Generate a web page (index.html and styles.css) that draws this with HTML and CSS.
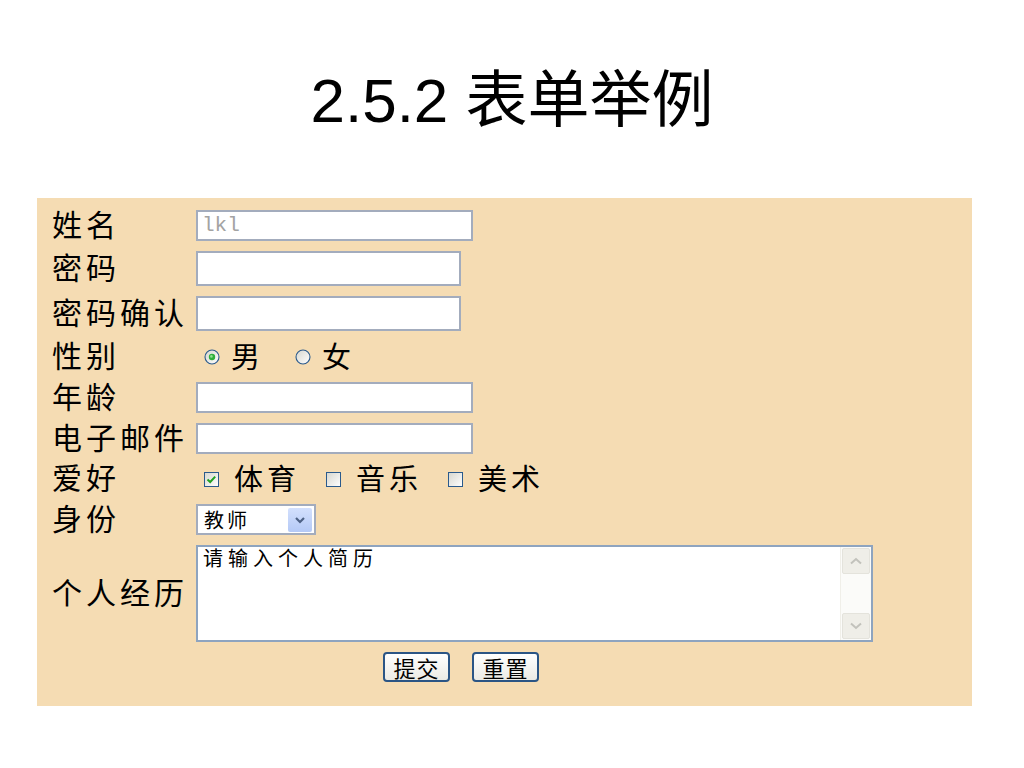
FILE: index.html
```html
<!DOCTYPE html>
<html lang="zh-CN">
<head>
    <meta charset="UTF-8">
    <meta name="viewport" content="width=device-width, initial-scale=1.0">
    <title>2.5.2 表单举例</title>
    <link rel="stylesheet" href="styles.css">
</head>
<body>
    <h1 class="title">2.5.2 表单举例</h1>

    <form class="panel">
        <div class="row">
            <label class="field-label" for="name">姓名</label>
            <input class="text wide" id="name" type="text" value="lkl">
        </div>
        <div class="row">
            <label class="field-label" for="pwd">密码</label>
            <input class="text narrow" id="pwd" type="password">
        </div>
        <div class="row">
            <label class="field-label" for="pwd2">密码确认</label>
            <input class="text narrow" id="pwd2" type="password">
        </div>
        <div class="row">
            <span class="field-label">性别</span>
            <div class="choices">
                <label class="choice radio-choice">
                    <svg width="16" height="16" viewBox="0 0 16 16">
                        <defs>
                            <linearGradient id="rg" x1="0" y1="0" x2="1" y2="1">
                                <stop offset="0" stop-color="#d6d6ce"/>
                                <stop offset="1" stop-color="#ffffff"/>
                            </linearGradient>
                        </defs>
                        <circle cx="8" cy="8" r="7" fill="url(#rg)" stroke="#2a5a8c" stroke-width="1.1"/>
                        <circle cx="8" cy="8" r="3.2" fill="#2fae3b"/>
                        <circle cx="7.4" cy="7.4" r="1.3" fill="#8fe08f"/>
                    </svg>
                    <span>男</span>
                </label>
                <label class="choice radio-choice">
                    <svg width="16" height="16" viewBox="0 0 16 16">
                        <circle cx="8" cy="8" r="7" fill="url(#rg)" stroke="#2a5a8c" stroke-width="1.1"/>
                    </svg>
                    <span>女</span>
                </label>
            </div>
        </div>
        <div class="row">
            <label class="field-label" for="age">年龄</label>
            <input class="text wide" id="age" type="text">
        </div>
        <div class="row">
            <label class="field-label" for="mail">电子邮件</label>
            <input class="text wide" id="mail" type="text">
        </div>
        <div class="row">
            <span class="field-label">爱好</span>
            <div class="choices checks">
                <label class="choice">
                    <svg width="15" height="15" viewBox="0 0 15 15">
                        <defs>
                            <linearGradient id="cg" x1="0" y1="0" x2="1" y2="1">
                                <stop offset="0" stop-color="#d6d6ce"/>
                                <stop offset="1" stop-color="#ffffff"/>
                            </linearGradient>
                        </defs>
                        <rect x="0.5" y="0.5" width="14" height="14" fill="url(#cg)" stroke="#2a5a8c"/>
                        <path d="M3.5 7.5 L6.2 10 L11.2 4.6" fill="none" stroke="#21a121" stroke-width="2"/>
                    </svg>
                    <span>体育</span>
                </label>
                <label class="choice">
                    <svg width="15" height="15" viewBox="0 0 15 15">
                        <rect x="0.5" y="0.5" width="14" height="14" fill="url(#cg)" stroke="#2a5a8c"/>
                    </svg>
                    <span>音乐</span>
                </label>
                <label class="choice">
                    <svg width="15" height="15" viewBox="0 0 15 15">
                        <rect x="0.5" y="0.5" width="14" height="14" fill="url(#cg)" stroke="#2a5a8c"/>
                    </svg>
                    <span>美术</span>
                </label>
            </div>
        </div>
        <div class="row">
            <label class="field-label" for="role">身份</label>
            <div class="select">
                <select id="role">
                    <option>教师</option>
                    <option>学生</option>
                </select>
                <span class="select-btn">
                    <svg width="12" height="8" viewBox="0 0 12 8">
                        <path d="M2 2 L6 6 L10 2" fill="none" stroke="#4d6185" stroke-width="2.2"/>
                    </svg>
                </span>
            </div>
        </div>
        <div class="row">
            <label class="field-label" for="memo">个人经历</label>
            <div class="memo">
                <textarea id="memo">请输入个人简历</textarea>
                <div class="scrollbar">
                    <span class="scroll-btn">
                        <svg width="14" height="8" viewBox="0 0 14 8">
                            <path d="M2 6.5 L7 2 L12 6.5" fill="none" stroke="#c2c2bc" stroke-width="2"/>
                        </svg>
                    </span>
                    <span class="scroll-btn">
                        <svg width="14" height="8" viewBox="0 0 14 8">
                            <path d="M2 1.5 L7 6 L12 1.5" fill="none" stroke="#c2c2bc" stroke-width="2"/>
                        </svg>
                    </span>
                </div>
            </div>
        </div>
        <div class="actions">
            <button type="submit" class="btn">提交</button>
            <button type="reset" class="btn">重置</button>
        </div>
    </form>
</body>
</html>
```

FILE: styles.css
```css
body {
    margin: 0;
    background-color: #fff;
    color: #000;
    font-family: "Noto Sans CJK SC", sans-serif;
}
.title {
    margin: 65px 0 0;
    text-align: center;
    font: normal 62px/72px "Liberation Sans", "Noto Sans CJK SC", sans-serif;
}
.panel {
    box-sizing: border-box;
    margin: 61px 0 0 37px;
    width: 935px;
    height: 508px;
    padding: 12px 0 0 15px;
    background-color: #f5dcb3;
    display: flex;
    flex-direction: column;
    gap: 10px;
}
.row {
    display: grid;
    grid-template-columns: 144px 1fr;
    align-items: center;
    justify-items: start;
}
.field-label {
    margin: -3px 0 3px;
    font-size: 30px;
    line-height: 30px;
    letter-spacing: 4px;
    white-space: nowrap;
}
.text {
    box-sizing: border-box;
    margin: 0;
    height: 31px;
    padding: 0 4px;
    border: 2px solid #a3acbd;
    background-color: #fff;
    font: 21px "Liberation Mono", monospace;
    color: #a3a3a3;
    outline: none;
}
.wide {
    width: 277px;
}
.narrow {
    width: 265px;
    height: 35px;
}
.choices {
    display: flex;
    align-items: center;
    height: 31px;
    padding-left: 8px;
    font-size: 29px;
    line-height: 30px;
    letter-spacing: 4px;
}
.checks {
    height: 29px;
}
.choice {
    display: flex;
    align-items: center;
    gap: 15px;
    margin-right: 26px;
}
.choice span {
    margin: -2px 0 2px;
}
.radio-choice {
    gap: 11px;
    margin-right: 31px;
}
.choice svg {
    display: block;
}
.select {
    box-sizing: border-box;
    display: flex;
    align-items: center;
    width: 120px;
    height: 31px;
    padding: 0 2px 0 6px;
    border: 2px solid #a3acbd;
    background-color: #fff;
}
.select select {
    flex: 1;
    min-width: 0;
    appearance: none;
    border: 0;
    padding: 0;
    background: transparent;
    font: 20px "Noto Sans CJK SC", sans-serif;
    letter-spacing: 3px;
    color: #000;
    outline: none;
}
.select-btn {
    display: flex;
    align-items: center;
    justify-content: center;
    width: 24px;
    height: 24px;
    border-radius: 2px;
    background: linear-gradient(#d3e0fd, #b4c9f6);
}
.memo {
    box-sizing: border-box;
    display: flex;
    width: 677px;
    height: 97px;
    border: 2px solid #8ea4bf;
    background-color: #fff;
}
.memo textarea {
    flex: 1;
    border: 0;
    margin: 0;
    padding: 0 5px;
    resize: none;
    background: transparent;
    font: 20px/22px "Noto Sans CJK SC", sans-serif;
    letter-spacing: 5px;
    color: #000;
    outline: none;
}
.scrollbar {
    display: flex;
    flex-direction: column;
    justify-content: space-between;
    width: 28px;
    padding: 1px;
    background-color: #fbfbf9;
    border-left: 1px solid #f0efe9;
}
.scroll-btn {
    display: flex;
    align-items: center;
    justify-content: center;
    height: 24px;
    border: 1px solid #e4e3dc;
    border-radius: 2px;
    background-color: #efeee8;
}
.actions {
    display: flex;
    gap: 22px;
    padding-left: 331px;
}
.btn {
    width: 67px;
    height: 30px;
    padding: 0;
    border: 2px solid #2b5585;
    border-radius: 4px;
    background: linear-gradient(#ffffff, #ebeae4);
    font: 22px/24px "Noto Sans CJK SC", sans-serif;
    letter-spacing: 1px;
    color: #000;
    cursor: pointer;
}
```
